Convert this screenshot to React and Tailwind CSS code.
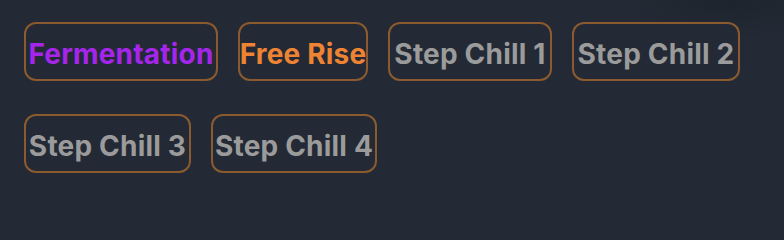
const steps = [
  { label: 'Fermentation', color: 'text-[#a526ea]', w: 'w-[194px]' },
  { label: 'Free Rise', color: 'text-[#ee8433]', w: 'w-[130px]' },
  { label: 'Step Chill 1', color: 'text-[#9b9b9b]', w: 'w-[164px]' },
  { label: 'Step Chill 2', color: 'text-[#9b9b9b]', w: 'w-[168px]' },
  { label: 'Step Chill 3', color: 'text-[#9b9b9b]', w: 'w-[167px]' },
  { label: 'Step Chill 4', color: 'text-[#9b9b9b]', w: 'w-[166px]' },
]

function StepButton({ label, color, w }) {
  return (
    <button
      className={`${w} h-[59px] flex items-center justify-center rounded-xl border-2 border-[#8b5a2f] bg-[#232a35] ${color} text-[28px] leading-none font-bold whitespace-nowrap pt-[4px] tracking-[0.2px]`}
      style={{ fontFamily: 'Inter, "Noto Sans", sans-serif' }}
    >
      {label}
    </button>
  )
}

export default function App() {
  return (
    <div className="min-h-screen w-full bg-[#232a35]">
      <div className="w-[784px] h-[210px] pl-6 pt-[22px] pr-6 bg-[radial-gradient(ellipse_110px_40px_at_730px_0px,#1e242d,transparent)]">
        <div className="flex flex-wrap gap-x-[20px] gap-y-[33px] w-[736px]">
          {steps.map((s) => (
            <StepButton key={s.label} {...s} />
          ))}
        </div>
      </div>
    </div>
  )
}
